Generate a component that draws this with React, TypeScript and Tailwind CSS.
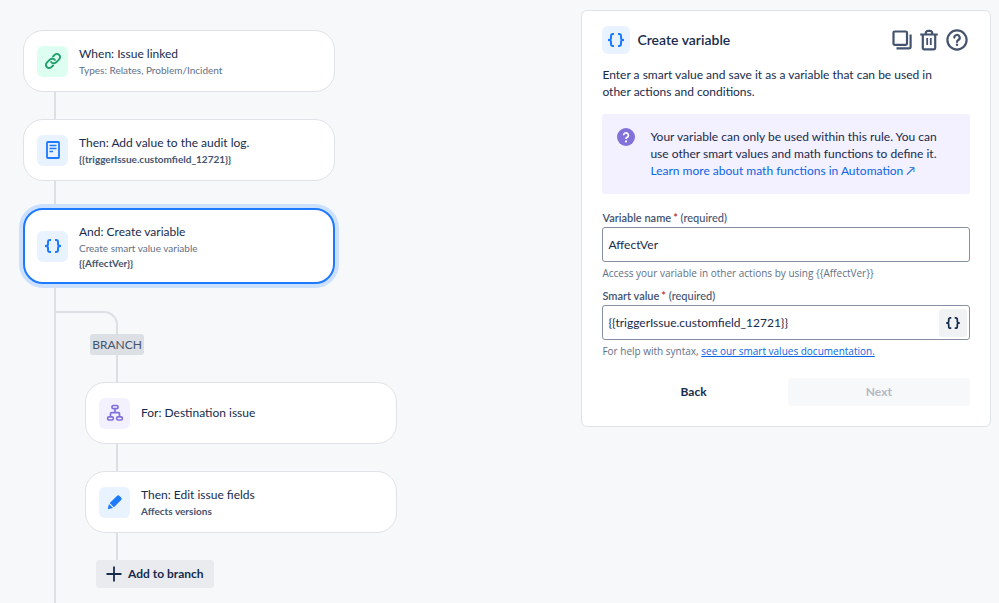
import { useState, type ReactNode } from "react";

function LinkIcon() {
  return (
    <svg viewBox="0 0 24 24" className="h-[18px] w-[18px]" fill="none" stroke="#22a06b" strokeWidth="2.6" strokeLinecap="round">
      <path d="M9.500 13.300a4.400 4.400 0 0 0 6.400.8l4.300-4.300a4.200 4.200 0 0 0-6-6l-2.200 2.200" />
      <path d="M14.500 10.700a4.400 4.400 0 0 0-6.400-.8l-4.300 4.300a4.200 4.200 0 0 0 6 6l2.200-2.200" />
    </svg>
  );
}

function LogIcon() {
  return (
    <svg viewBox="0 0 18 18" className="h-[18px] w-[18px]" fill="none" stroke="#1d7afc">
      <rect x="3" y="1" width="12" height="16" rx="0.8" strokeWidth="1.800" />
      <path d="M5.500 4.500h7M5.500 7.500h7M5.500 10.500h3.500" strokeWidth="1.600" />
    </svg>
  );
}

function BracesIcon({ className }: { className: string }) {
  return (
    <svg viewBox="0 0 18 14" className={className} fill="none" stroke="currentColor" strokeWidth="2">
      <path d="M7 1H6a2 2 0 0 0-2 2v2.200C4 6.300 3.300 7 1 7 3.300 7 4 7.700 4 8.800V11a2 2 0 0 0 2 2h1" />
      <path d="M11 1h1a2 2 0 0 1 2 2v2.200C14 6.300 14.700 7 17 7 14.700 7 14 7.700 14 8.800V11a2 2 0 0 1-2 2h-1" />
    </svg>
  );
}

function BranchIcon() {
  return (
    <svg viewBox="0 0 18 18" className="h-[18px] w-[18px]" fill="none" stroke="#8270db" strokeWidth="1.700">
      <rect x="6" y="1.500" width="6" height="3.200" rx="1.300" />
      <rect x="1.700" y="12.800" width="5.600" height="3.200" rx="1.300" />
      <rect x="10.700" y="12.800" width="5.600" height="3.200" rx="1.300" />
      <path d="M9 4.700v4M4.500 12.800V9.700a1 1 0 0 1 1-1h7a1 1 0 0 1 1 1v3.100" />
    </svg>
  );
}

function PencilIcon() {
  return (
    <svg viewBox="0 0 18 18" className="h-[18px] w-[18px]" fill="#1d7afc">
      <path d="M3.700 10.100 10.900 2.900a1.900 1.900 0 0 1 2.700 0l1.500 1.500a1.900 1.900 0 0 1 0 2.700l-7.200 7.200z" />
      <path d="M3 11 7 15 2.600 16.100a.6.600 0 0 1-.7-.7z" />
    </svg>
  );
}

function CopyIcon() {
  return (
    <svg viewBox="0 0 20 20" className="h-5 w-5" fill="none" stroke="currentColor" strokeWidth="2.200">
      <rect x="1.500" y="1.500" width="13.500" height="13.300" rx="1.200" />
      <path d="M18.600 4.500V16.700a1.600 1.600 0 0 1-1.600 1.600H4.500" />
    </svg>
  );
}

function TrashIcon() {
  return (
    <svg viewBox="0 0 20 22" className="h-[22px] w-5" fill="none" stroke="currentColor" strokeWidth="2.200">
      <path d="M1.200 5.500h17.600M6.800 5.300V4A2.200 2.200 0 0 1 9 1.800h2A2.200 2.200 0 0 1 13.200 4v1.300" />
      <path d="M3.800 6v13a1.300 1.300 0 0 0 1.300 1.300h9.800a1.300 1.300 0 0 0 1.300-1.300V6" />
      <path d="M8.200 9v7M11.800 9v7" strokeWidth="1.800" />
    </svg>
  );
}

function HelpIcon() {
  return (
    <svg viewBox="0 0 22 22" className="h-[22px] w-[22px]" fill="none" stroke="currentColor" strokeWidth="2.200">
      <circle cx="11" cy="11" r="9.600" />
      <path d="M8.300 8.600a2.700 2.700 0 1 1 4 2.400c-.9.500-1.300.9-1.300 1.900" strokeLinecap="round" />
      <circle cx="11" cy="15.800" r="1.200" fill="currentColor" stroke="none" />
    </svg>
  );
}

type StepProps = {
  icon: ReactNode;
  tile: string;
  title: string;
  text?: string;
  value?: string;
  selected?: boolean;
};

function Step({ icon, tile, title, text, value, selected }: StepProps) {
  return (
    <button
      type="button"
      className={`flex w-full items-center gap-[11px] rounded-[20px] bg-white text-left ${
        selected
          ? "h-[76px] border-2 border-[#1d7afc] px-3 ring-4 ring-[#cce0ff]"
          : "h-[62px] border border-[#dfe2e7] px-[13px]"
      }`}
    >
      <span className={`grid h-[31px] w-[31px] shrink-0 place-items-center rounded-md ${tile}`}>{icon}</span>
      <span className="flex flex-col">
        <span className="text-[12px] leading-[18px] text-[#172b4d]">{title}</span>
        {text && <span className="text-[10px] leading-[15px] text-[#626f86]">{text}</span>}
        {value && <span className="text-[10px] leading-[14px] font-bold text-[#44546f]">{value}</span>}
      </span>
    </button>
  );
}

function Connector() {
  return <div className="ml-[31px] h-[27px] w-[2px] bg-[#dcdfe4]" />;
}

function Flow() {
  return (
    <section className="flex flex-1 flex-col pt-[30px] pl-[23px]">
      <div className="w-full max-w-[312px]">
        <Step icon={<LinkIcon />} tile="bg-[#dcfff1]" title="When: Issue linked" text="Types: Relates, Problem/Incident" />
        <Connector />
        <Step icon={<LogIcon />} tile="bg-[#e9f2ff]" title="Then: Add value to the audit log." value="{{triggerIssue.customfield_12721}}" />
        <Connector />
        <Step
          selected
          icon={<BracesIcon className="h-[14px] w-[18px] text-[#1d7afc]" />}
          tile="bg-[#e9f2ff]"
          title="And: Create variable"
          text="Create smart value variable"
          value="{{AffectVer}}"
        />
      </div>

      {/* trunk goes on below the branch */}
      <div className="ml-[31px] flex-1 border-l-2 border-[#dcdfe4] pt-[27px] pb-4">
        <div className="h-[23px] w-[62px] rounded-tr-[14px] border-t-2 border-r-2 border-[#dcdfe4]" />
        <div className="ml-[29px] w-full max-w-[312px]">
          <div className="flex w-16 justify-center">
            <span className="rounded-[3px] bg-[#dcdfe4] px-[2px] text-[12px] leading-[21px] text-[#44546f]">BRANCH</span>
          </div>
          <Connector />
          <Step icon={<BranchIcon />} tile="bg-[#f3f0ff]" title="For: Destination issue" />
          <Connector />
          <Step icon={<PencilIcon />} tile="bg-[#e9f2ff]" title="Then: Edit issue fields" value="Affects versions" />
          <Connector />
          <button
            type="button"
            className="ml-[11px] flex h-7 items-center gap-[6px] rounded-[3px] bg-[#e9ebee] px-[10px] text-[12px] font-bold text-[#172b4d]"
          >
            <svg viewBox="0 0 16 16" className="h-4 w-4" stroke="currentColor" strokeWidth="1.800">
              <path d="M8 0.500v15M0.500 8h15" />
            </svg>
            Add to branch
          </button>
        </div>
      </div>
    </section>
  );
}

function FieldLabel({ id, children }: { id: string; children: ReactNode }) {
  return (
    <label htmlFor={id} className="block text-[11px] leading-[18px] font-semibold text-[#44546f]">
      {children}
      <span className="ml-[2px] text-[#ae2e24]">*</span> <span className="font-medium">(required)</span>
    </label>
  );
}

function HelpText({ children }: { children: ReactNode }) {
  return (
    <p className="mt-[3px] font-['Open_Sans','Noto_Sans',sans-serif] text-[10px] leading-[17px] text-[#626f86]">{children}</p>
  );
}

function VariablePanel() {
  const [name, setName] = useState("AffectVer");
  const [value, setValue] = useState("{{triggerIssue.customfield_12721}}");

  return (
    <aside className="mt-[10px] mr-2 w-[41%] shrink-0 self-start rounded-md border border-[#dfe2e7] bg-white px-5 pt-[15px] pb-5">
      <header className="flex items-center gap-[7px]">
        <span className="grid h-7 w-7 place-items-center rounded-md bg-[#e9f2ff]">
          <BracesIcon className="h-[14px] w-[18px] text-[#1d7afc]" />
        </span>
        <h2 className="flex-1 text-[14px] leading-[18px] font-semibold text-[#172b4d]">Create variable</h2>
        <div className="flex items-center gap-[7px] pr-[2px] text-[#44546f]">
          <button type="button" aria-label="Duplicate"><CopyIcon /></button>
          <button type="button" aria-label="Delete"><TrashIcon /></button>
          <button type="button" aria-label="Help"><HelpIcon /></button>
        </div>
      </header>

      <p className="mt-3 pr-5 text-[12px] leading-[17px] text-[#172b4d]">
        Enter a smart value and save it as a variable that can be used in other actions and conditions.
      </p>

      <div className="mt-[14px] flex gap-[15px] rounded-[3px] bg-[#f3f0ff] py-[14px] pr-5 pl-[15px]">
        <svg viewBox="0 0 18 18" className="h-[18px] w-[18px] shrink-0">
          <circle cx="9" cy="9" r="9" fill="#8270db" />
          <path d="M6.600 7.200a2.400 2.400 0 1 1 3.600 2.100c-.9.500-1.200.8-1.200 1.700" fill="none" stroke="#fff" strokeWidth="1.700" />
          <circle cx="9" cy="13.400" r="1.100" fill="#fff" />
        </svg>
        <p className="pb-[1px] text-[12px] leading-[17px] text-[#172b4d]">
          Your variable can only be used within this rule. You can use other smart values and math functions to define it.
          <br />
          <a href="#math" className="text-[#0c66e4]">Learn more about math functions in Automation ↗</a>
        </p>
      </div>

      <div className="mt-[15px]">
        <FieldLabel id="variable-name">Variable name</FieldLabel>
        <input
          id="variable-name"
          value={name}
          onChange={(e) => setName(e.target.value)}
          className="block h-[35px] w-full rounded-[3px] border border-[#8590a2] bg-white px-[5px] text-[12px] text-[#172b4d]"
        />
        <HelpText>Access your variable in other actions by using {"{{AffectVer}}"}</HelpText>
      </div>

      <div className="mt-[5px]">
        <FieldLabel id="smart-value">Smart value</FieldLabel>
        <div className="flex h-[35px] items-center rounded-[3px] border border-[#8590a2] pr-[2px]">
          <input
            id="smart-value"
            value={value}
            onChange={(e) => setValue(e.target.value)}
            className="h-full min-w-0 flex-1 bg-transparent px-[5px] text-[12px] text-[#172b4d]"
          />
          <button
            type="button"
            aria-label="Insert smart value"
            className="grid h-7 w-7 place-items-center rounded-[3px] bg-[#f1f2f4] text-[#172b4d]"
          >
            <BracesIcon className="h-3 w-4" />
          </button>
        </div>
        <HelpText>
          For help with syntax, <a href="#docs" className="text-[#0c66e4] underline">see our smart values documentation.</a>
        </HelpText>
      </div>

      <div className="mt-[18px] grid grid-cols-2 gap-[3px] text-[12px] font-bold">
        <button type="button" className="h-7 rounded-[3px] text-[#172b4d]">Back</button>
        <button type="button" disabled className="h-7 rounded-[3px] bg-[#f7f8f9] text-[#b3b9c4]">Next</button>
      </div>
    </aside>
  );
}

export default function App() {
  return (
    <main className="flex min-h-screen bg-[#f7f8f9] font-['Lato','Open_Sans',sans-serif]">
      <Flow />
      <VariablePanel />
    </main>
  );
}
